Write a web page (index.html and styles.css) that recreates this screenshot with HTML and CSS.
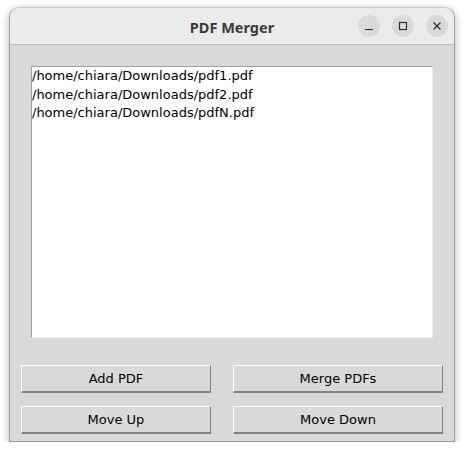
FILE: index.html
```html
<!DOCTYPE html>
<html>
<head>
<meta charset="utf-8">
<link rel="stylesheet" href="styles.css">
</head>
<body>
<div class="window">
  <div class="titlebar">
    <span class="title">PDF Merger</span>
    <div class="controls">
      <span class="ctl"><svg width="10" height="10" viewBox="0 0 10 10"><path d="M1 8.5h8" stroke="#2e2e2e" stroke-width="1.2"/></svg></span>
      <span class="ctl"><svg width="10" height="10" viewBox="0 0 10 10"><rect x="1.5" y="1.5" width="7" height="7" fill="none" stroke="#2e2e2e" stroke-width="1.2"/></svg></span>
      <span class="ctl"><svg width="10" height="10" viewBox="0 0 10 10"><path d="M1.5 1.5l7 7M8.5 1.5l-7 7" stroke="#2e2e2e" stroke-width="1.3"/></svg></span>
    </div>
  </div>
  <div class="content">
    <div class="listbox">
      <div class="item">/home/chiara/Downloads/pdf1.pdf</div>
      <div class="item">/home/chiara/Downloads/pdf2.pdf</div>
      <div class="item">/home/chiara/Downloads/pdfN.pdf</div>
    </div>
    <div class="buttons">
      <button class="btn">Add PDF</button>
      <button class="btn">Merge PDFs</button>
      <button class="btn">Move Up</button>
      <button class="btn">Move Down</button>
    </div>
  </div>
</div>
</body>
</html>
```
FILE: styles.css
```css
html, body {
  margin: 0;
  padding: 0;
  background: #ffffff;
}
body {
  padding: 7px 0 0 9px;
  font-family: "DejaVu Sans", sans-serif;
}
.window {
  width: 444px;
  height: 433px;
  border: 1px solid #9c9c9c;
  border-top-color: #c8c8c8;
  border-radius: 10px 10px 0 0;
  background: #d9d9d9;
  box-shadow: 0 2px 8px rgba(0,0,0,0.28);
  display: flex;
  flex-direction: column;
  overflow: hidden;
}
.titlebar {
  height: 36px;
  background: #ebebeb;
  border-bottom: 1px solid #bdbdbd;
  position: relative;
  display: flex;
  align-items: center;
  justify-content: center;
}
.title {
  font-family: "Noto Sans", "DejaVu Sans", sans-serif;
  font-weight: bold;
  font-size: 14.5px;
  color: #3a3a3a;
  margin-top: 1px;
}
.controls {
  position: absolute;
  right: 6px;
  top: 7px;
  display: flex;
  gap: 12px;
}
.ctl {
  width: 22px;
  height: 22px;
  border-radius: 50%;
  background: #dadada;
  display: flex;
  align-items: center;
  justify-content: center;
}
.content {
  flex: 1;
  display: flex;
  flex-direction: column;
  padding: 21px 0 0 0;
}
.listbox {
  margin-left: 21px;
  width: 400px;
  height: 270px;
  background: #ffffff;
  border: 1px solid #a0a0a0;
  border-right-color: #ececec;
  border-bottom-color: #ececec;
  padding: 0;
}
.item {
  font-size: 13px;
  line-height: 18.5px;
  color: #000;
  padding-left: 0;
  height: 18.5px;
  white-space: nowrap;
}
.buttons {
  margin-top: 27px;
  margin-left: 11px;
  display: grid;
  grid-template-columns: 190px 210px;
  column-gap: 22px;
  row-gap: 13px;
}
.btn {
  height: 28px;
  margin: 0;
  padding: 0;
  background: #d9d9d9;
  border: 1px solid;
  border-color: #ffffff #808080 #808080 #ffffff;
  border-width: 1px 1px 2px 1px;
  font-family: "DejaVu Sans", sans-serif;
  font-size: 13px;
  color: #000;
  border-radius: 0;
}
```
